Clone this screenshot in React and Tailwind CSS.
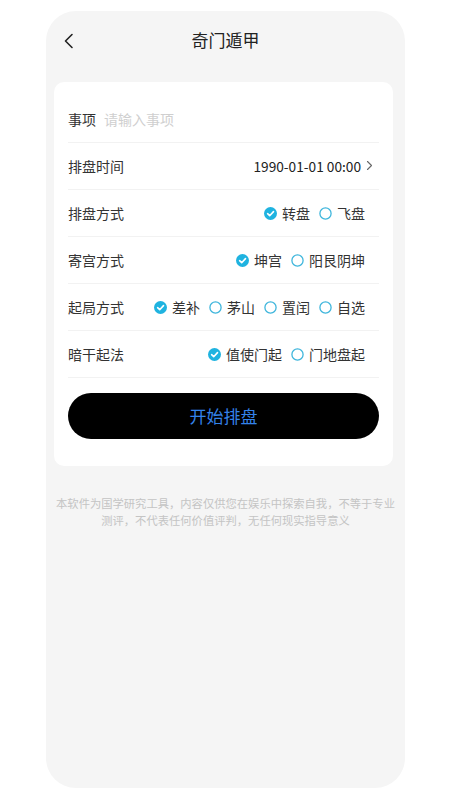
import React from "react";

const font = { fontFamily: '"Noto Sans CJK SC", "Noto Sans", sans-serif' };

function Radio({ checked, label }) {
  return (
    <div className="flex items-center gap-[5px]">
      {checked ? (
        <svg width="13" height="13" viewBox="0 0 13 13">
          <circle cx="6.5" cy="6.5" r="6.5" fill="#1fb3e0" />
          <path d="M3.6 6.7 L5.7 8.7 L9.5 4.6" fill="none" stroke="#fff" strokeWidth="1.6" strokeLinecap="round" strokeLinejoin="round" />
        </svg>
      ) : (
        <svg width="13" height="13" viewBox="0 0 13 13">
          <circle cx="6.5" cy="6.5" r="5.6" fill="#fff" stroke="#3fb6dc" strokeWidth="1.3" />
        </svg>
      )}
      <span className="text-[14px] text-[#333]">{label}</span>
    </div>
  );
}

function Row({ label, children }) {
  return (
    <div className="flex h-[47px] items-center justify-between border-b border-[#f2f2f2]">
      <span className="text-[14px] text-[#333]">{label}</span>
      {children}
    </div>
  );
}

export default function App() {
  return (
    <div className="min-h-[800px] w-[450px] bg-white pt-[11px]" style={font}>
      <div className="ml-[46px] h-[777px] w-[359px] rounded-[30px] bg-[#f5f5f5]">
        <div className="relative flex h-[58px] items-center justify-center">
          <svg className="absolute left-[17px] top-[22px]" width="12" height="16" viewBox="0 0 12 16">
            <path d="M9 1.5 L2.5 8 L9 14.5" fill="none" stroke="#222" strokeWidth="1.6" strokeLinecap="round" strokeLinejoin="round" />
          </svg>
          <span className="text-[17px] text-[#222]">奇门遁甲</span>
        </div>
        <div className="ml-[8px] mr-[12px] mt-[13px] rounded-[10px] bg-white px-[14px] pb-[27px] pt-[14px]">
          <div className="flex h-[47px] items-center border-b border-[#f2f2f2]">
            <span className="text-[14px] text-[#333]">事项</span>
            <span className="ml-[8px] text-[14px] text-[#cfcfcf]">请输入事项</span>
          </div>
          <Row label="排盘时间">
            <div className="flex items-center gap-[5px] pr-[6px]">
              <span className="text-[13.7px] text-[#222]">1990-01-01 00:00</span>
              <svg width="7" height="11" viewBox="0 0 7 11">
                <path d="M1.5 1.5 L5.5 5.5 L1.5 9.5" fill="none" stroke="#666" strokeWidth="1.1" strokeLinecap="round" strokeLinejoin="round" />
              </svg>
            </div>
          </Row>
          <Row label="排盘方式">
            <div className="flex items-center gap-[9px] pr-[14px]">
              <Radio checked label="转盘" />
              <Radio label="飞盘" />
            </div>
          </Row>
          <Row label="寄宫方式">
            <div className="flex items-center gap-[9px] pr-[14px]">
              <Radio checked label="坤宫" />
              <Radio label="阳艮阴坤" />
            </div>
          </Row>
          <Row label="起局方式">
            <div className="flex items-center gap-[9px] pr-[14px]">
              <Radio checked label="差补" />
              <Radio label="茅山" />
              <Radio label="置闰" />
              <Radio label="自选" />
            </div>
          </Row>
          <Row label="暗干起法">
            <div className="flex items-center gap-[9px] pr-[14px]">
              <Radio checked label="值使门起" />
              <Radio label="门地盘起" />
            </div>
          </Row>
          <button className="mt-[15px] flex h-[46px] w-full items-center justify-center rounded-full bg-black text-[17px] text-[#3483ea]">
            开始排盘
          </button>
        </div>
        <p className="mt-[29px] whitespace-nowrap text-center text-[11.3px] leading-[17px] text-[#c4c4c4]">
          本软件为国学研究工具，内容仅供您在娱乐中探索自我，不等于专业
          <br />
          测评，不代表任何价值评判，无任何现实指导意义
        </p>
      </div>
    </div>
  );
}
